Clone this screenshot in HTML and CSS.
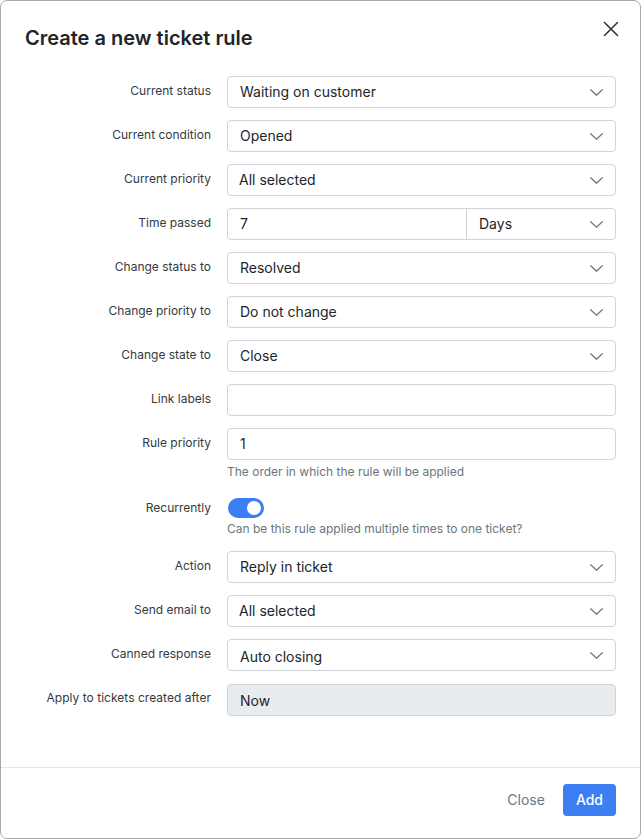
FILE: index.html
```html
<!DOCTYPE html>
<html lang="en">
<head>
<meta charset="utf-8">
<title>Create a new ticket rule</title>
<link rel="stylesheet" href="styles.css">
</head>
<body>
<div class="modal">
  <div class="modal-header">
    <h1 class="modal-title">Create a new ticket rule</h1>
    <button class="close-x" aria-label="Close">
      <svg width="16" height="16" viewBox="0 0 16 16"><path d="M1.5 1.5 L14.5 14.5 M14.5 1.5 L1.5 14.5" stroke="#2b2f33" stroke-width="1.5" fill="none" stroke-linecap="round"/></svg>
    </button>
  </div>
  <div class="modal-body">
    <div class="row">
      <label class="label">Current status</label>
      <div class="control"><div class="select">Waiting on customer<span class="chev"></span></div></div>
    </div>
    <div class="row">
      <label class="label">Current condition</label>
      <div class="control"><div class="select">Opened<span class="chev"></span></div></div>
    </div>
    <div class="row">
      <label class="label">Current priority</label>
      <div class="control"><div class="select multi">All selected<span class="chev"></span></div></div>
    </div>
    <div class="row">
      <label class="label">Time passed</label>
      <div class="control group">
        <div class="input group-left">7</div>
        <div class="select group-right">Days<span class="chev"></span></div>
      </div>
    </div>
    <div class="row">
      <label class="label">Change status to</label>
      <div class="control"><div class="select">Resolved<span class="chev"></span></div></div>
    </div>
    <div class="row">
      <label class="label">Change priority to</label>
      <div class="control"><div class="select">Do not change<span class="chev"></span></div></div>
    </div>
    <div class="row">
      <label class="label">Change state to</label>
      <div class="control"><div class="select">Close<span class="chev"></span></div></div>
    </div>
    <div class="row">
      <label class="label">Link labels</label>
      <div class="control"><div class="input"></div></div>
    </div>
    <div class="row">
      <label class="label">Rule priority</label>
      <div class="control">
        <div class="input">1</div>
        <div class="help">The order in which the rule will be applied</div>
      </div>
    </div>
    <div class="row row-toggle">
      <label class="label label-toggle">Recurrently</label>
      <div class="control">
        <div class="toggle-wrap"><span class="toggle"><span class="knob"></span></span></div>
        <div class="help help-toggle">Can be this rule applied multiple times to one ticket?</div>
      </div>
    </div>
    <div class="row">
      <label class="label">Action</label>
      <div class="control"><div class="select">Reply in ticket<span class="chev"></span></div></div>
    </div>
    <div class="row">
      <label class="label">Send email to</label>
      <div class="control"><div class="select multi">All selected<span class="chev"></span></div></div>
    </div>
    <div class="row row-canned">
      <label class="label">Canned response</label>
      <div class="control"><div class="select low">Auto closing<span class="chev"></span></div></div>
    </div>
    <div class="row">
      <label class="label label-apply">Apply to tickets created after</label>
      <div class="control"><div class="input disabled">Now</div></div>
    </div>
  </div>
  <div class="modal-footer">
    <button class="btn btn-link">Close</button>
    <button class="btn btn-primary">Add</button>
  </div>
</div>
</body>
</html>
```
FILE: styles.css
```css
* { box-sizing: border-box; }
html, body { margin: 0; padding: 0; background: #ffffff; }
body {
  font-family: Inter, "Noto Sans", "Liberation Sans", sans-serif;
  color: #212529;
}
.modal {
  position: relative;
  width: 641px;
  height: 839px;
  border: 1px solid #a9a9a9;
  border-radius: 7px;
  display: flex;
  flex-direction: column;
  background: #fff;
}
.modal-header {
  padding: 25px 24px 26px;
}
.modal-title {
  margin: 0;
  font-size: 20px;
  line-height: 24px;
  font-weight: 600;
  color: #212529;
}
.close-x {
  position: absolute;
  top: 19px;
  right: 20px;
  width: 18px;
  height: 18px;
  padding: 1px;
  border: 0;
  background: none;
  display: flex;
  align-items: center;
  justify-content: center;
}
.modal-body {
  flex: 1;
  padding: 0 24px;
}
.row {
  display: grid;
  grid-template-columns: 186px 1fr;
  column-gap: 16px;
  margin-bottom: 12px;
}
.label {
  text-align: right;
  font-size: 12px;
  line-height: 18px;
  padding-top: 6px;
  color: #343a40;
}
.label-toggle { padding-top: 7px; }
.label-apply { padding-top: 5px; letter-spacing: 0.03px; }
.row-toggle { margin-bottom: 14px; }
.row-canned { margin-bottom: 13px; }
.control { min-width: 0; }
.select, .input {
  position: relative;
  height: 32px;
  border: 1px solid #ced4da;
  border-radius: 4px;
  padding: 0 12px;
  font-size: 14px;
  line-height: 30px;
  color: #212529;
  background: #fff;
}
.multi { padding-left: 11px; }
.low { padding-top: 3px; line-height: 27px; }
.disabled { background: #e9ecef; padding-top: 2px; line-height: 28px; }
.chev {
  position: absolute;
  right: 12px;
  top: 12px;
  width: 13px;
  height: 7px;
  background: no-repeat center/13px 7px url("data:image/svg+xml,%3Csvg xmlns='http://www.w3.org/2000/svg' width='13' height='7' viewBox='0 0 13 7'%3E%3Cpath d='M0.7 0.7 L6.5 6.2 L12.3 0.7' fill='none' stroke='%236c757d' stroke-width='1.2' stroke-linecap='round' stroke-linejoin='round'/%3E%3C/svg%3E");
}
.group { display: flex; }
.group-left {
  flex: 1;
  border-radius: 4px 0 0 4px;
}
.group-right {
  width: 150px;
  margin-left: -1px;
  border-radius: 0 4px 4px 0;
}
.help {
  margin-top: 4px;
  font-size: 12px;
  line-height: 16px;
  color: #6c757d;
}
.help-toggle { margin-top: 3px; }
.toggle-wrap { padding-top: 6px; height: 26px; }
.toggle {
  display: block;
  position: relative;
  width: 36px;
  height: 20px;
  margin-left: 1px;
  border-radius: 10px;
  background: #3b7ff3;
}
.knob {
  position: absolute;
  right: 3px;
  top: 3px;
  width: 14px;
  height: 14px;
  border-radius: 50%;
  background: #fff;
}
.modal-footer {
  border-top: 1px solid #e3e6e9;
  padding: 16px 24px 22px;
  display: flex;
  justify-content: flex-end;
  align-items: center;
}
.btn {
  font-family: Inter, "Noto Sans", "Liberation Sans", sans-serif;
  font-size: 14px;
  line-height: 20px;
  height: 32px;
  border: 0;
  border-radius: 4px;
  padding: 6px 13px;
  cursor: pointer;
}
.btn-link {
  background: none;
  color: #6c757d;
  padding: 6px 12px;
  margin-right: 6px;
}
.btn-primary {
  background: #3b7ff3;
  color: #fff;
  font-weight: 500;
}
```
